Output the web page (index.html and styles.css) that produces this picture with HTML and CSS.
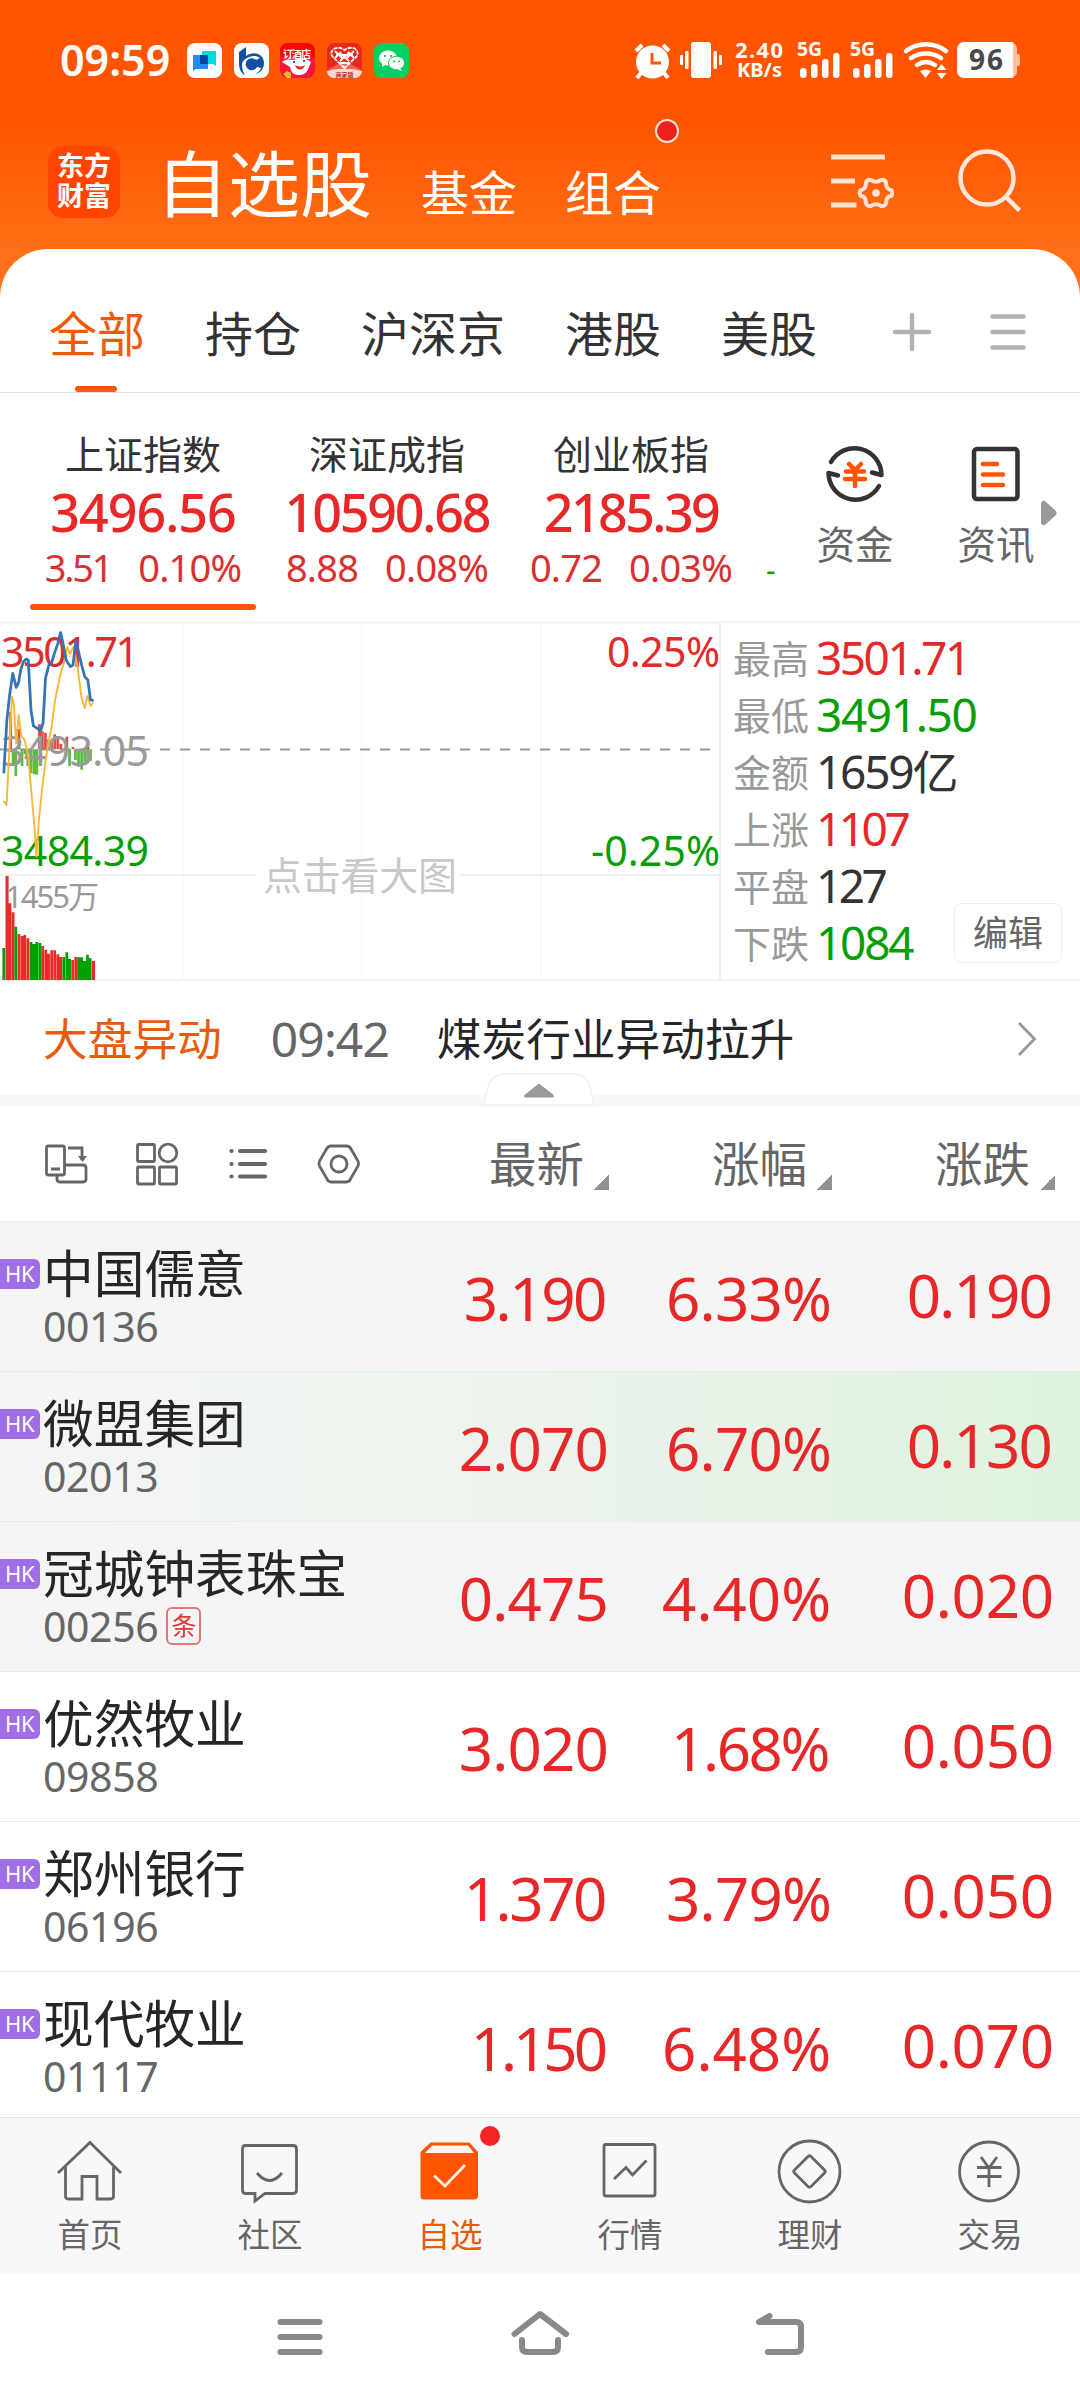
FILE: index.html
```html
<!DOCTYPE html>
<html lang="zh-CN">
<head>
<meta charset="utf-8">
<title>自选股</title>
<link rel="stylesheet" href="styles.css">
</head>
<body>
<header class="top">
  <div class="status">
    <span class="clock">09:59</span>
    <div class="notices">
      <svg width="35" height="35" viewBox="0 0 35 35"><rect width="35" height="35" rx="8" fill="#fff"/><path d="M15 8h14v15l-3-2H15z" fill="#00dbe2"/><path d="M6 12h15v14H9l-3 2z" fill="#2689ff"/><path d="M13 12h8v9h-8z" fill="#0045a8"/></svg>
      <svg width="35" height="35" viewBox="0 0 35 35"><rect width="35" height="35" rx="8" fill="#fff"/><path d="M5 9l7-5v9c8-6 18-2 18 7 0 6-4 10-9 11 3-2 5-3 6-6l-4-1a6 6 0 1 1-1-7l4-2C20 10 9 15 8 21c0 5 1 8 3 11-4-2-6-6-6-12z" fill="#10509e"/><circle cx="16.500" cy="23" r="3.500" fill="#10509e"/></svg>
      <svg width="35" height="35" viewBox="0 0 35 35"><rect width="35" height="35" rx="8" fill="#f5173c"/><path d="M0 14V8a8 8 0 0 1 8-8h19a8 8 0 0 1 8 8v6z" fill="#f90505"/><text x="3" y="15" font-size="10" font-weight="700" fill="#fff" textLength="28">订酒店</text><path d="M2 19c5-4 9-2 12-2 5-3 13-2 17 2l-2 5c-2 6-5 8-10 8s-8-2-9-8z" fill="#fff"/><path d="M15 22c4 2 7 2 10 0-1 5-8 7-10 0z" fill="#d8262b"/><circle cx="14" cy="19" r="1" fill="#222"/><circle cx="24" cy="18" r="1" fill="#222"/><path d="M3 31l4-3 4 2v5H7z" fill="#ffb21a"/></svg>
      <svg width="35" height="35" viewBox="0 0 35 35"><rect width="35" height="35" rx="8" fill="#e9291b"/><path d="M0 27l17-9 18 9" fill="#f0624f"/><g fill="none" stroke="#fff" stroke-width="1.800"><path d="M17.500 25L5 13c-3-7 6-11 12.500-6C24 2 33 6 30 13z" stroke-dasharray="4 1"/><path d="M8 8l7 7M27 8l-7 7M8 15l6-6M27 15l-6-6M13 18l9-8M22 18l-9-8M13 20h9M9 12h17"/></g><path d="M0 28c10-3 25-3 35 0a7 7 0 0 1-8 7H8a7 7 0 0 1-8-7z" fill="#fbd9d2"/><text x="8.500" y="33.500" font-size="6" font-weight="700" fill="#b8352c">商家版</text></svg>
      <svg width="35" height="35" viewBox="0 0 35 35"><rect width="35" height="35" rx="8" fill="#07cf62"/><ellipse cx="14" cy="15" rx="9" ry="7.500" fill="#fff"/><path d="M8 20v4l5-3z" fill="#fff"/><ellipse cx="22.500" cy="20" rx="8" ry="6.800" fill="#fff" stroke="#07cf62"/><path d="M26 25l2 3-5-2z" fill="#fff"/><g fill="#07b955"><circle cx="11" cy="13" r="1.100"/><circle cx="17" cy="13" r="1.100"/><circle cx="20" cy="18.500" r="1"/><circle cx="25" cy="18.500" r="1"/></g></svg>
    </div>
    <svg class="sys" width="392" height="60" viewBox="632 30 392 60">
      <g fill="none" stroke="#fff" stroke-width="4"><path d="M636 51l6-6M669 51l-6-6"/><path d="M641 73l-4 5M664 73l4 5"/></g>
      <circle cx="652.500" cy="62" r="16.500" fill="#fff"/><path d="M652 53v10h9" fill="none" stroke="#ff5500" stroke-width="3"/>
      <g fill="#fff"><rect x="691" y="42" width="20" height="36" rx="3"/><rect x="685" y="51" width="3.500" height="18" rx="1"/><rect x="680" y="55" width="3" height="10" rx="1"/><rect x="713.500" y="51" width="3.500" height="18" rx="1"/><rect x="719" y="55" width="3" height="10" rx="1"/></g>
      <g fill="#fff" font-weight="700"><text x="735" y="58" font-size="22" textLength="48">2.40</text><text x="737" y="77" font-size="19.500" textLength="45" lengthAdjust="spacingAndGlyphs">KB/s</text><text x="797" y="56" font-size="19" textLength="25" lengthAdjust="spacingAndGlyphs">5G</text><text x="850" y="56" font-size="19" textLength="25" lengthAdjust="spacingAndGlyphs">5G</text></g>
      <g fill="#fff"><rect x="800" y="68" width="6.500" height="10" rx="3"/><rect x="811" y="64" width="6.500" height="14" rx="3"/><rect x="822" y="59" width="6.500" height="19" rx="3"/><rect x="833" y="53" width="6.500" height="25" rx="3"/><rect x="853" y="68" width="6.500" height="10" rx="3"/><rect x="864" y="64" width="6.500" height="14" rx="3"/><rect x="875" y="59" width="6.500" height="19" rx="3"/><rect x="886" y="53" width="6.500" height="25" rx="3"/></g>
      <g fill="none" stroke="#fff" stroke-width="4.500" stroke-linecap="round"><path d="M906 51c12-9 28-9 40 0M911 58c9-6 21-6 30 0M917 65c6-4 12-4 18 0"/></g><path d="M920 71q6-3 11 0l-5.500 7zM937 70l4.500-6 5 6zM937 73h9.500l-5 6z" fill="#fff"/>
      <rect x="1001" y="42" width="16" height="36" rx="7" fill="#ffc0a0"/><rect x="1014" y="54" width="6" height="12" rx="2" fill="#ffc0a0"/><path d="M964 42h49v36h-49a7 7 0 0 1-7-7V49a7 7 0 0 1 7-7z" fill="#fff"/>
      <text x="969" y="70" font-size="28" font-weight="700" fill="#484848" textLength="34">96</text>
    </svg>
  </div>
  <div class="title-bar">
    <div class="logo">东方<br>财富</div>
    <h1 class="title">自选股</h1>
    <span class="section">基金</span>
    <span class="section section-group">组合<i class="dot"></i></span>
    <svg class="filter" width="64" height="60" viewBox="830 151 64 60" fill="none" stroke="#ffe2d2" stroke-width="5"><path d="M831 157h54M831 181h24M831 205h25.500"/><path d="M870.700 179.900q5.300 3.600 10.600 0a4.500 4.500 0 0 1 4.800 2.800q-.4 6.400 5.300 7.500a5 5 0 0 1 0 5.600q-5.700 1.100-5.300 7.500a4.500 4.500 0 0 1-4.800 2.800q-5.300-3.600-10.600 0a4.500 4.500 0 0 1-4.800-2.800q.4-6.400-5.300-7.500a5 5 0 0 1 0-5.600q5.700-1.100 5.300-7.500a4.500 4.500 0 0 1 4.800-2.800z" stroke-width="4" stroke-linejoin="round"/><circle cx="876" cy="193" r="3.800" fill="#ffe2d2" stroke="none"/></svg>
    <svg class="search" width="64" height="66" viewBox="957 148 64 66" fill="none" stroke="#ffe6d8" stroke-width="4.500"><circle cx="987" cy="178" r="26.500"/><path d="M1006 197l13.500 13.500"/></svg>
  </div>
</header>
<main class="panel">
  <nav class="tabs">
    <a class="tab active">全部</a><a class="tab">持仓</a><a class="tab">沪深京</a><a class="tab">港股</a><a class="tab">美股</a>
    <svg class="tab-tools" width="138" height="42" viewBox="890 311 138 42" stroke="#b2b2b2" stroke-width="4.500" stroke-linecap="round"><path d="M895 332h34M912 315v34M992.500 316.500h31M992.500 332h31M992.500 347.500h31"/></svg>
  </nav>
  <section class="indices">
    <div class="index current"><span class="index-name">上证指数</span><b class="index-value">3496.56</b><span class="change"><span class="one">3.51</span><span>0.10%</span></span></div>
    <div class="index"><span class="index-name">深证成指</span><b class="index-value long">10590.68</b><span class="change"><span>8.88</span><span>0.08%</span></span></div>
    <div class="index"><span class="index-name">创业板指</span><b class="index-value short">2185.39</b><span class="change"><span>0.72</span><span>0.03%</span></span></div>
    <span class="next-index">-</span>
    <div class="shortcuts">
      <div class="shortcut"><svg width="64" height="64" viewBox="824 442 64 64" fill="none" stroke="#333" stroke-width="4.500" stroke-linecap="round" stroke-linejoin="round"><path d="M832 462a27 27 0 0 1 50.500 13l-9.500-2.500M880 486a27 27 0 0 1-50.500-13l9.500 2.500"/><path d="M850 464l6 6 6-6M847 471.500h18M846 479h20M856 471v15" stroke="#ff5500"/></svg><span>资金</span></div>
      <div class="shortcut"><svg width="64" height="64" viewBox="965 442 64 64" fill="none" stroke="#333" stroke-width="4.500" stroke-linecap="round"><rect x="975" y="449" width="43.500" height="50" rx="3"/><path d="M984 464h14M984 474.500h20M984 485h20" stroke="#ff5500"/></svg><span>资讯</span></div>
    </div>
    <svg class="more" width="16" height="26" viewBox="0 0 16 26"><path d="M0 3Q2-1 5 2l10 9q1 2 0 4L5 24q-3 3-5-1z" fill="#999"/></svg>
  </section>
  <section class="market">
    <svg class="chart" width="721" height="360" viewBox="0 621 721 360">
      <path d="M0 622.500h721M0 875h257M460 875h260M0 980h721M720 621v360" stroke="#f1f1f1" stroke-width="2"/>
      <path d="M183 624v356M362 624v232M362 898v82M541 624v356" stroke="#ededed" stroke-dasharray="2 2"/>
      <path d="M0 749.500h720" stroke="#999" stroke-width="2" stroke-dasharray="10 10"/>
      <g transform="translate(0 610) scale(.34439 .33333)">
        <path fill="#e84b4b" d="M27 306h8v112h-8zM51 357h8v61h-8zM110 343h9v75h-9zM119 364h8v54h-8zM128 368h8v50h-8zM137 388h8v30h-8zM146 395h8v23h-8zM155 373h8v45h-8zM164 378h8v40h-8zM173 402h8v16h-8zM190 380h8v38h-8zM208 411h8v7h-8zM251 393h8v25h-8z"/>
        <path fill="#5dbd42" d="M34 418h8v47h-8zM42 418h8v80h-8zM60 418h8v50h-8zM69 418h8v15h-8zM77 418h8v50h-8zM86 418h8v72h-8zM95 418h8v74h-8zM103 418h8v76h-8zM198 418h8v50h-8zM215 418h8v32h-8zM224 418h8v52h-8zM233 418h8v61h-8zM242 418h8v37h-8zM251 418h8v34h-8zM260 418h7v34h-7z"/>
        <path fill="#ee2929" d="M16 798h9v312h-9zM25 880h8v230h-8zM34 907h8v203h-8zM51 972h8v138h-8zM60 978h8v132h-8zM68 975h8v135h-8zM77 985h8v125h-8zM120 1008h8v102h-8zM129 1019h8v91h-8zM137 1031h8v79h-8zM146 1021h8v89h-8zM155 1021h8v89h-8zM164 1033h8v77h-8zM172 1041h8v69h-8zM207 1050h8v60h-8zM216 1041h8v69h-8zM267 1053h9v57h-9z"/>
        <path fill="#00a000" d="M7 1014h8v96H7zM42 950h8v160h-8zM86 996h8v114h-8zM94 1002h9v108h-9zM103 996h8v114h-8zM112 999h8v111h-8zM181 1041h8v69h-8zM190 1027h8v83h-8zM198 1047h8v63h-8zM224 1042h9v68h-9zM233 1042h8v68h-8zM241 1053h9v57h-9zM250 1034h8v76h-8zM258 1045h8v65h-8z"/>
      </g>
      <g class="axis">
        <text x="1" y="667" fill="#df2b2b" textLength="138">3501.71</text>
        <text x="1" y="766" fill="#999" textLength="148">3493.05</text>
        <text x="1" y="866" fill="#069d06" textLength="148">3484.39</text>
        <text x="607" y="667" fill="#df2b2b" textLength="113">0.25%</text>
        <text x="591" y="866" fill="#069d06" textLength="129">-0.25%</text>
        <text x="5" y="908" fill="#999" font-size="31" textLength="94">1455万</text>
        <text x="263" y="890" fill="#c8c8c8" font-size="39" textLength="194">点击看大图</text>
      </g>
      <g transform="translate(0 610) scale(.34439 .33333)" fill="none" stroke-linejoin="round">
        <path d="M10 572l9 13 16-325 5 22 7 118 7-85 8 65 10 10 10 50 18 210 6 90 6-100 12-120 13-100 13-70 10-80 16-80 12-40 7-40 8 22 11-22 11 60 12 95 9 30 8-37 9 30 7-10" stroke="#f5b83d" stroke-width="5.500"/>
        <path d="M11 490l9-160 8-75 9-65 10 42 7-14 6-38 8-25 8-8 6 3 8 150 7 48 11 7 10 7 7-22 7-135 10-40 8-7 8-28 10-30 8-32 8 37 8 45 12 20 8-5 8-70 8 30 9 40 9 35 9 10 8 60 9 2" stroke="#3474b7" stroke-width="8"/>
      </g>
    </svg>
    <dl class="stats">
      <dt>最高</dt><dd class="up n3">3501.71</dd>
      <dt>最低</dt><dd class="down n1">3491.50</dd>
      <dt>金额</dt><dd class="n2">1659亿</dd>
      <dt>上涨</dt><dd class="up n4">1107</dd>
      <dt>平盘</dt><dd class="n4">127</dd>
      <dt>下跌</dt><dd class="down n2">1084</dd>
      <button class="edit">编辑</button>
    </dl>
  </section>
  <section class="news">
    <span class="news-tag">大盘异动</span><time>09:42</time><span class="news-text">煤炭行业异动拉升</span>
    <svg width="22" height="38" viewBox="0 0 22 38" fill="none" stroke="#999" stroke-width="2.800"><path d="M2 3l15.500 16L2 35"/></svg>
    <svg class="fold" width="114" height="34" viewBox="0 0 114 34"><path d="M2 33L6 15Q10 2 23 2H91q13 0 17 13l4 18z" fill="#fff" stroke="#f1f2f4" stroke-width="2"/><path d="M43 25.500q-2-1 0-3L55 13q2-2 4 0l12 9.500q2 2 0 3z" fill="#999"/></svg>
  </section>
  <div class="band"></div>
  <section class="list-head">
    <svg class="tools" width="320" height="46" viewBox="43 1141 320 46" fill="none" stroke="#666" stroke-width="2.800">
      <rect x="46.500" y="1146" width="18" height="29" rx="2"/><path d="M51 1169h9M57 1175v4q0 3 3 3h23q3 0 3-3v-11q0-3-3-3H65M68 1148h14v12"/><path d="M78 1156h9l-4.500 6z" fill="#666" stroke="none"/>
      <rect x="137.500" y="1144.500" width="17" height="17" rx="1"/><circle cx="168" cy="1153" r="8.800"/><rect x="137.500" y="1167" width="17" height="17" rx="1"/><rect x="159.500" y="1167" width="17" height="17" rx="1"/>
      <g stroke-width="4.200" stroke-linecap="round"><path d="M240 1151h25M240 1164h25M240 1176.500h25M231.500 1151h.1M231.500 1164h.1M231.500 1176.500h.1"/></g>
      <path d="M331 1146h15.500q3 0 4.500 3l7 12q1 2.500 0 5l-7 12q-1.500 4-4.500 4H331q-3 0-4.500-4l-7-12q-1-2.500 0-5l7-12q1.500-3 4.500-3z"/><circle cx="339" cy="1164" r="8"/>
    </svg>
    <span class="sort">最新</span><span class="sort">涨幅</span><span class="sort">涨跌</span>
  </section>
  <section class="stocks">
    <div class="stock held"><i class="mkt">HK</i><div><div class="name">中国儒意</div><div class="code">00136</div></div><b class="one">3.190</b><b>6.33%</b><b class="diff one">0.190</b></div>
    <div class="stock held flash"><i class="mkt">HK</i><div><div class="name">微盟集团</div><div class="code">02013</div></div><b>2.070</b><b>6.70%</b><b class="diff one">0.130</b></div>
    <div class="stock held"><i class="mkt">HK</i><div><div class="name">冠城钟表珠宝</div><div class="code">00256<em class="mark">条</em></div></div><b>0.475</b><b class="wide">4.40%</b><b class="diff">0.020</b></div>
    <div class="stock"><i class="mkt">HK</i><div><div class="name">优然牧业</div><div class="code">09858</div></div><b>3.020</b><b class="one">1.68%</b><b class="diff">0.050</b></div>
    <div class="stock"><i class="mkt">HK</i><div><div class="name">郑州银行</div><div class="code">06196</div></div><b class="one">1.370</b><b>3.79%</b><b class="diff">0.050</b></div>
    <div class="stock"><i class="mkt">HK</i><div><div class="name">现代牧业</div><div class="code">01117</div></div><b class="ones">1.150</b><b class="wide">6.48%</b><b class="diff">0.070</b></div>
  </section>
</main>
<nav class="tabbar">
  <a><svg width="70" height="70" viewBox="55 2136 70 70"><path d="M58 2173l32-30.500 31 30.500M65.500 2167v29q0 3 3 3H82v-22.500h15V2199h13.500q3 0 3-3v-29"/></svg>首页</a>
  <a><svg width="70" height="70" viewBox="235 2136 70 70"><path d="M245.500 2145.500H293q3.500 0 3.500 3.500v41q0 3.500-3.500 3.500h-28l-10 7.500v-7.500h-9.500q-3 0-3-3.500v-41q0-3.500 3-3.500zM257 2173q12.500 15 25 0"/></svg>社区</a>
  <a class="active"><svg width="70" height="70" viewBox="415 2136 70 70"><path d="M420.500 2152l10-9.500h39l8.500 9.500v44q0 3.500-4 3.500h-50q-3.500 0-3.500-3.500z" fill="#ff5500" stroke="none"/><path d="M425 2153l7-7.500h36l6 7.500z" fill="#fff5ef" stroke="none"/><path d="M434 2175.500l11 10.500 20-21" stroke="#fff0e7"/></svg><i class="badge"></i>自选</a>
  <a><svg width="70" height="70" viewBox="595 2136 70 70"><rect x="604" y="2144.500" width="51" height="51.500" rx="2"/><path d="M614 2179l12-11.500 6.500 7.500 14-14.500"/></svg>行情</a>
  <a><svg width="70" height="70" viewBox="775 2136 70 70"><circle cx="809.500" cy="2171.500" r="30.500"/><path d="M808 2156.500q1.500-1.500 3 0l13.500 13.500q1.500 1.500 0 3L811 2186.500q-1.500 1.500-3 0L794.500 2173q-1.500-1.500 0-3z"/></svg>理财</a>
  <a><svg width="70" height="70" viewBox="955 2136 70 70"><circle cx="989" cy="2171.500" r="29.500"/><path d="M981 2157l8 11 8-11M977 2167.500h24.500M977 2176.500h24.500M989 2167v20"/></svg>交易</a>
</nav>
<footer class="sysnav">
  <svg width="536" height="52" viewBox="272 2307 536 52" fill="none" stroke="#898989" stroke-width="6" stroke-linecap="round" stroke-linejoin="round"><path d="M280.500 2322h39M280.500 2337h39M280.500 2352h39M514.500 2334l25.500-20 26 20M522 2340v7q0 5 5 5h26q5 0 5-5v-7M769.500 2316l-10.500 6h37q5 0 5 5v20q0 5-5 5h-28"/></svg>
</footer>
</body>
</html>
```

FILE: styles.css
```css
* { box-sizing: border-box; margin: 0; padding: 0; }

body {
  width: 1080px;
  height: 2400px;
  display: flex;
  flex-direction: column;
  overflow: hidden;
  background: #fff;
  color: #333;
  font-family: "Noto Sans", "Noto Sans CJK SC", sans-serif;
}

svg { display: block; flex: none; }
i, em { font-style: normal; }

/* Orange header */
.top {
  height: 300px;
  flex: none;
  background: linear-gradient(#ff5500 0, #ff5500 125px, #ff7018 255px);
}
.status {
  height: 120px;
  padding: 0 56px 0 60px;
  display: flex;
  align-items: center;
}
.clock {
  width: 127px;
  font-size: 43px;
  font-weight: 600;
  line-height: 60px;
  letter-spacing: 0;
  color: #fff;
}
.notices { display: flex; gap: 11.700px; }
.sys { margin-left: auto; }
.title-bar {
  height: 129px;
  padding: 0 59px 0 48px;
  display: flex;
  align-items: center;
  color: #fff;
}
.logo {
  width: 72px;
  height: 72px;
  margin-top: -6px;
  padding-top: 5px;
  border-radius: 15px;
  background: #ff4500;
  text-align: center;
  font-size: 27px;
  font-weight: 700;
  line-height: 30px;
}
.title { margin: -4px 0 0 36px; width: 222px; font-size: 72px; font-weight: 400; line-height: 90px; }
.section { margin: 16px 0 0 43px; font-size: 48px; line-height: 60px; position: relative; }
.section-group { margin-left: 48px; }
.dot {
  position: absolute;
  left: 90px;
  top: -44px;
  width: 24px;
  height: 24px;
  border-radius: 50%;
  border: 2px solid #ffe4d6;
  background: #f02020;
}
.filter { margin-left: auto; margin-top: -7px; }
.search { margin: -7px 0 0 63px; }

/* White content panel */
.panel {
  height: 1868px;
  flex: none;
  margin-top: -51px;
  border-radius: 48px 48px 0 0;
  background: #fff;
  overflow: hidden;
}
.tabs {
  height: 144px;
  padding-left: 49px;
  padding-right: 52px;
  display: flex;
  gap: 60px;
  border-bottom: 1px solid #e0e0e0;
}
.tab { height: 143px; line-height: 170px; font-size: 48px; }
.tab.active { color: #ee5a0a; position: relative; }
.tab.active::after {
  content: "";
  position: absolute;
  left: 26px;
  bottom: 0;
  width: 42px;
  height: 6px;
  border-radius: 3px;
  background: #ff5500;
}
.tab-tools { margin: 62px 0 0 auto; }

.indices { height: 228px; padding: 39px 0 0 21px; display: flex; position: relative; }
.index {
  width: 244px;
  height: 177px;
  display: flex;
  flex-direction: column;
  align-items: center;
  position: relative;
}
.index-name { font-size: 39px; line-height: 44px; }
.index-value {
  margin-top: 10px;
  font-size: 52px;
  line-height: 52px;
  font-weight: 500;
  letter-spacing: -1px;
  color: #e82828;
}
.index-value.long { letter-spacing: -2.200px; }
.index-value.short { letter-spacing: -2.600px; }
.change {
  display: flex;
  gap: 27px;
  margin-top: 2px;
  line-height: 54px;
  font-size: 38px;
  letter-spacing: -0.8px;
  color: #dc3030;
}
.change .one { letter-spacing: -2.200px; }
.index.current::after {
  content: "";
  position: absolute;
  left: 9px;
  bottom: -1px;
  width: 226px;
  height: 6px;
  border-radius: 3px;
  background: #ff5500;
}
.next-index { margin: 116px 0 0 13px; width: 20px; font-size: 30px; line-height: 44px; color: #069d06; }
.shortcuts { display: flex; gap: 63px; margin-left: 30px; padding-top: 10px; }
.shortcut { width: 78px; display: flex; flex-direction: column; align-items: center; font-size: 38.500px; line-height: 76px; color: #666; }
.more { position: absolute; left: 1041px; top: 107px; }

/* Minute chart and statistics */
.market { height: 360px; display: flex; }
.axis { font-size: 41px; }
.stats {
  width: 359px;
  height: 360px;
  padding: 7px 0 0 12px;
  border-top: 2px solid #f4f4f4;
  border-bottom: 2px solid #f1f1f1;
  display: grid;
  grid-template-columns: 83px 1fr;
  grid-auto-rows: 57px;
  position: relative;
}
.stats dt { font-size: 38px; line-height: 56px; color: #999; }
.stats dd { font-size: 46px; line-height: 55px; color: #333; white-space: nowrap; }
.stats .up { color: #e32929; }
.stats .down { color: #069d06; }
.n1 { letter-spacing: -1.400px; }
.n2 { letter-spacing: -2.200px; }
.n3 { letter-spacing: -2.500px; }
.stats .n4 { letter-spacing: -3.500px; }
.edit {
  position: absolute;
  left: 233px;
  top: 280px;
  width: 108px;
  height: 60px;
  border: 1px solid #ececec;
  border-radius: 7px;
  background: #fff;
  color: #666;
  font: 35px/58px "Noto Sans", "Noto Sans CJK SC", sans-serif;
}

.news {
  height: 114px;
  padding: 2px 41px 0 43px;
  display: flex;
  align-items: center;
  position: relative;
  font-size: 44.700px;
  line-height: 60px;
}
.news-tag { color: #e65c0c; }
.news time { margin-left: 49px; width: 119px; font-size: 48px; letter-spacing: -0.9px; color: #666; white-space: nowrap; }
.news-text { margin-left: 47px; margin-right: auto; color: #262626; }
.fold { position: absolute; left: 482px; top: 91px; }
.band { height: 12px; background: #f6f8fb; }

/* Watch list */
.list-head {
  height: 115px;
  padding-left: 43px;
  padding-right: 25px;
  display: flex;
  align-items: center;
  border-bottom: 1px solid #ebebeb;
}
.tools { margin-right: auto; }
.sort {
  width: 223px;
  display: flex;
  justify-content: flex-end;
  align-items: center;
  gap: 10px;
  font-size: 47.500px;
  line-height: 60px;
  color: #666;
}
.sort::after {
  content: "";
  width: 15px;
  height: 15px;
  margin-top: 36px;
  background: linear-gradient(135deg, transparent 50%, #909096 50%);
}
.stock {
  height: 150px;
  padding-right: 25px;
  display: grid;
  grid-template-columns: 43px 343px repeat(3, 223px);
  border-bottom: 1px solid #ebebeb;
}
.held { background: #f5f5f5; }
.flash { background: linear-gradient(90deg, #f5f5f5, #eef5ef 40%, #eaf3ea 60%, #dff3df); }
.mkt {
  width: 40px;
  height: 30px;
  margin-top: 37px;
  padding-left: 5px;
  border-radius: 0 6px 6px 0;
  background: #a06ee6;
  color: #fff;
  font-size: 22px;
  line-height: 29px;
  letter-spacing: -0.3px;
}
.name { margin-top: 21px; font-size: 50.700px; line-height: 62px; color: #262626; white-space: nowrap; }
.code { display: flex; align-items: center; font-size: 41px; line-height: 42px; letter-spacing: -0.4px; color: #666; }
.mark {
  width: 35px;
  height: 38px;
  margin-left: 8px;
  border: 2px solid #ee7272;
  border-radius: 6px;
  text-align: center;
  font-size: 25px;
  line-height: 33px;
  color: #d83a3a;
}
.stock b {
  font-size: 60px;
  font-weight: 400;
  line-height: 153px;
  height: 149px;
  padding-right: 1px;
  text-align: right;
  letter-spacing: -0.8px;
  color: #e82828;
}
.stock .diff { line-height: 147px; letter-spacing: -0.2px; }
.stock .one { padding-right: 4px; letter-spacing: -2.400px; }
.stock .diff.one { letter-spacing: -1.800px; }
.stock .ones { padding-right: 5px; letter-spacing: -4px; }
.stock .wide { letter-spacing: 0; }

/* Bottom bars */
.tabbar {
  height: 157px;
  flex: none;
  display: grid;
  grid-template-columns: repeat(6, 180px);
  background: #f8f8fb;
  border-top: 1px solid #e2e2e6;
}
.tabbar a {
  padding-top: 18px;
  display: flex;
  flex-direction: column;
  align-items: center;
  position: relative;
  font-size: 32.500px;
  line-height: 58px;
  color: #666;
}
.tabbar svg { fill: none; stroke: #666; stroke-width: 2.800; }
.tabbar .active { color: #e65c0c; }
.badge { position: absolute; left: 120px; top: 8px; width: 20px; height: 20px; border-radius: 50%; background: #f22424; }
.sysnav { height: 126px; padding: 33px 0 0 272px; background: #fff; }
```
